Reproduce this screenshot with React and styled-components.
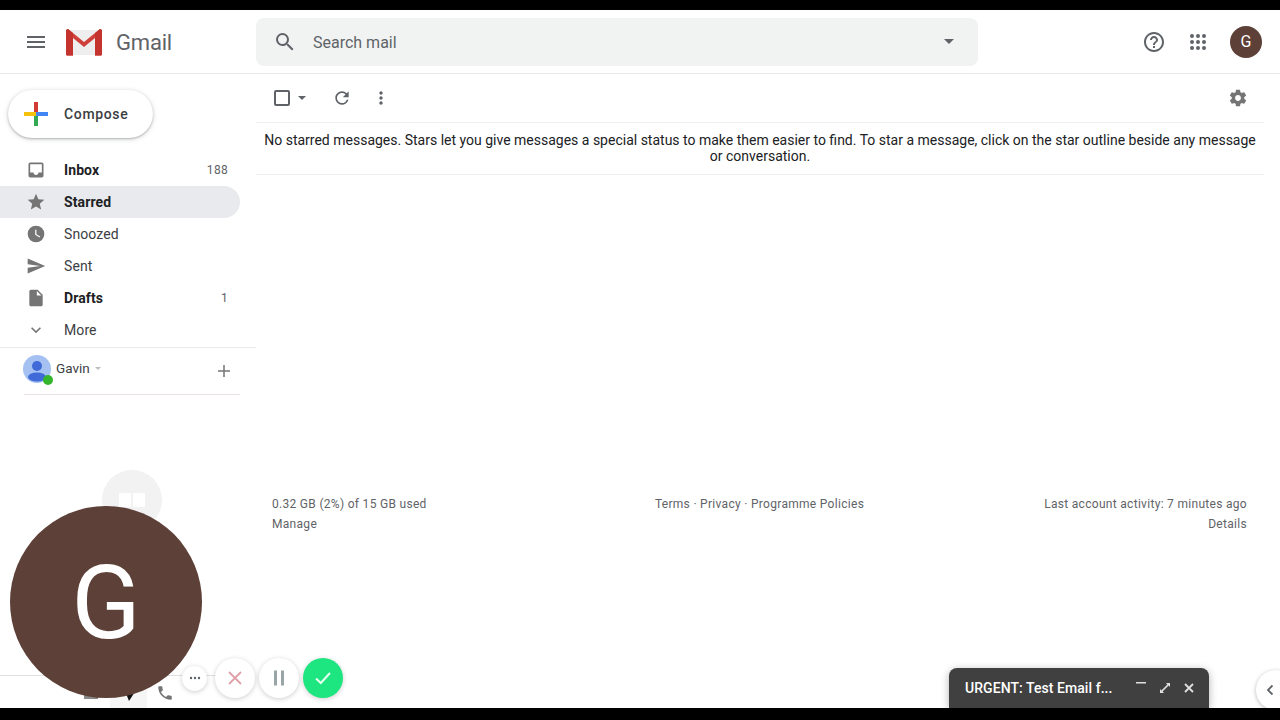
import React from 'react';
import styled, { createGlobalStyle } from 'styled-components';

const GlobalStyle = createGlobalStyle`
  html, body { margin: 0; padding: 0; background: #000; }
  body { font-family: Roboto, "Liberation Sans", sans-serif; }
  * { box-sizing: border-box; }
`;

const Screen = styled.div`
  position: relative;
  width: 1280px;
  height: 720px;
  padding: 10px 0 12px;
  background: #000;
  overflow: hidden;
`;

const Page = styled.div`
  position: relative;
  display: flex;
  flex-direction: column;
  height: 698px;
  background: #fff;
  overflow: hidden;
`;

const Header = styled.header`
  display: flex;
  align-items: center;
  flex: none;
  height: 64px;
  border-bottom: 1px solid #e8eaed;
`;

const Brand = styled.div`
  display: flex;
  align-items: center;
  width: 256px;
  padding-left: 24px;
`;

const BrandName = styled.span`
  margin-left: 13px;
  padding-top: 2px;
  font-size: 22px;
  color: #5f6368;
  letter-spacing: -0.2px;
`;

const SearchBar = styled.div`
  display: flex;
  align-items: center;
  width: 722px;
  height: 48px;
  padding: 0 16px 0 17px;
  background: #f1f3f3;
  border-radius: 8px;
`;

const SearchText = styled.span`
  flex: 1;
  margin-left: 16px;
  padding-top: 2px;
  font-size: 16px;
  color: #5f6368;
`;

const HeaderActions = styled.div`
  display: flex;
  align-items: center;
  gap: 20px;
  margin-left: auto;
  padding-right: 18px;
`;

const Avatar = styled.div`
  display: flex;
  align-items: center;
  justify-content: center;
  width: ${(p) => p.$size}px;
  height: ${(p) => p.$size}px;
  border-radius: 50%;
  background: #5d4037;
  color: #fff;
  font-size: ${(p) => p.$font}px;
`;

const Body = styled.div`
  display: flex;
  flex: 1;
  min-height: 0;
`;

const Sidebar = styled.aside`
  flex: none;
  width: 256px;
  padding-top: 16px;
`;

const Compose = styled.div`
  display: flex;
  align-items: center;
  width: 145px;
  height: 48px;
  margin: 0 0 16px 8px;
  padding-left: 16px;
  gap: 16px;
  border-radius: 24px;
  background: #fff;
  box-shadow: 0 1px 2px rgba(60, 64, 67, 0.3), 0 1px 4px 1px rgba(60, 64, 67, 0.15);
  font-size: 14px;
  font-weight: 500;
  letter-spacing: 0.65px;
  color: #3c4043;
`;

const NavList = styled.nav`
  width: 240px;
`;

const NavRow = styled.div`
  display: flex;
  align-items: center;
  height: 32px;
  padding: 0 12px 0 26px;
  border-radius: 0 16px 16px 0;
  font-size: 14px;
  letter-spacing: 0.1px;
  font-weight: ${(p) => (p.$bold ? 700 : 400)};
  color: ${(p) => (p.$bold ? '#202124' : '#3c4043')};
  background: ${(p) => (p.$active ? '#e8eaed' : 'transparent')};
`;

const NavIcon = styled.span`
  display: flex;
  width: 20px;
  height: 20px;
  margin-right: 18px;
  color: #757575;
`;

const NavCount = styled.span`
  margin-left: auto;
  font-size: 12px;
  font-weight: 400;
  letter-spacing: 0.3px;
  color: #5f6368;
`;

const AccountRow = styled.div`
  position: relative;
  display: flex;
  align-items: flex-start;
  height: 48px;
  width: 240px;
  margin-top: 1px;
  padding: 7px 8px 0 23px;
  border-top: 1px solid #e8eaed;
  font-size: 13.5px;
  color: #3c4043;
  &::after {
    content: '';
    position: absolute;
    left: 24px;
    right: 0;
    bottom: 0;
    height: 1px;
    background: #e8e2e2;
  }
  &::before {
    content: '';
    position: absolute;
    top: -1px;
    left: 240px;
    width: 16px;
    height: 1px;
    background: #e8eaed;
  }
`;

const AccountPic = styled.div`
  position: relative;
  flex: none;
  width: 28px;
  height: 28px;
  margin-right: 5px;
  border-radius: 50%;
  background: #a5c1f2;
`;

const OnlineDot = styled.span`
  position: absolute;
  right: -2px;
  bottom: -2px;
  width: 10px;
  height: 10px;
  border-radius: 50%;
  background: #34b52c;
`;

const AccountName = styled.span`
  margin-top: 5px;
`;

const Caret = styled.span`
  width: 0;
  height: 0;
  margin: ${(p) => p.$margin};
  border-left: ${(p) => p.$size}px solid transparent;
  border-right: ${(p) => p.$size}px solid transparent;
  border-top: ${(p) => p.$size}px solid ${(p) => p.$color};
`;

const AddButton = styled.span`
  margin-left: auto;
  margin-top: 8px;
  display: flex;
  color: #757575;
`;

const Main = styled.main`
  flex: 1;
  min-width: 0;
  padding-right: 16px;
`;

const Toolbar = styled.div`
  display: flex;
  align-items: center;
  height: 49px;
  padding: 0 16px 0 18px;
  border-bottom: 1px solid #eeeff1;
  color: #5f6368;
`;

const ToolbarGroup = styled.div`
  display: flex;
  align-items: center;
  margin-right: ${(p) => p.$gap}px;
`;

const CheckBox = styled.span`
  width: 16px;
  height: 16px;
  border: 2px solid #5f6368;
  border-radius: 2px;
`;

const EmptyMessage = styled.p`
  margin: 0;
  padding: 9px 6px 10px;
  border-bottom: 1px solid #eeeff1;
  font-size: 14px;
  line-height: 16px;
  text-align: center;
  color: #202124;
`;

const Footer = styled.footer`
  display: flex;
  justify-content: space-between;
  margin-top: 319px;
  padding: 0 17px 0 16px;
  font-size: 12px;
  line-height: 20px;
  letter-spacing: 0.3px;
  color: #5f6368;
`;

const FooterCol = styled.div`
  flex: 1;
  text-align: ${(p) => p.$align};
`;

/* things floating over the page */
const HangoutsGhost = styled.div`
  position: absolute;
  left: 102px;
  top: 460px;
  width: 60px;
  height: 60px;
  display: flex;
  justify-content: center;
  gap: 2px;
  padding-top: 23px;
  border-radius: 50%;
  background: #f2f2f2;
`;

const GhostMark = styled.span`
  width: 12px;
  height: 14px;
  background: #fff;
`;

const HangoutsColumn = styled.div`
  position: absolute;
  left: 110px;
  top: 650px;
  width: 37px;
  height: 48px;
  background: #f6f6f6;
`;

const HangoutsLine = styled.div`
  position: absolute;
  left: 0;
  top: 665px;
  width: 240px;
  height: 1px;
  background: #dfe0e2;
`;

const HangoutsTab = styled.span`
  position: absolute;
  left: ${(p) => p.$left}px;
  top: ${(p) => p.$top}px;
  display: flex;
  color: ${(p) => p.$color};
`;

const CallerAvatar = styled.div`
  position: absolute;
  left: 10px;
  top: 496px;
  display: flex;
  align-items: center;
  justify-content: center;
  width: 192px;
  height: 192px;
  padding-top: 2px;
  border-radius: 50%;
  background: #5d4037;
  color: #fff;
  font-size: 102px;
  line-height: 1;
`;

const CallControls = styled.div`
  position: absolute;
  left: 182px;
  top: 648px;
  display: flex;
  align-items: center;
  gap: 4px;
`;

const RoundButton = styled.div`
  display: flex;
  align-items: center;
  justify-content: center;
  width: ${(p) => p.$size}px;
  height: ${(p) => p.$size}px;
  margin-right: ${(p) => p.$after || 0}px;
  border-radius: 50%;
  background: ${(p) => p.$bg || '#fff'};
  box-shadow: 0 1px 5px rgba(0, 0, 0, 0.2);
`;

const ComposeTab = styled.div`
  position: absolute;
  left: 949px;
  top: 658px;
  display: flex;
  align-items: center;
  width: 260px;
  height: 40px;
  padding: 0 14px 0 16px;
  border-radius: 8px 8px 0 0;
  background: #404040;
  box-shadow: 0 2px 8px rgba(0, 0, 0, 0.3);
  color: #fff;
  font-size: 14px;
  font-weight: 500;
  letter-spacing: 0.06px;
`;

const ComposeTabTitle = styled.span`
  flex: 1;
`;

const ComposeTabIcons = styled.div`
  display: flex;
  align-items: center;
  gap: 12px;
`;

const SidePanelToggle = styled.div`
  position: absolute;
  left: 1256px;
  top: 660px;
  display: flex;
  align-items: center;
  width: 40px;
  height: 40px;
  padding-left: 9px;
  border-radius: 50%;
  background: #fff;
  box-shadow: 0 1px 4px rgba(0, 0, 0, 0.28);
`;

const Icon = ({ size = 24, children, fill = 'currentColor', ...rest }) => (
  <svg width={size} height={size} viewBox="0 0 24 24" fill={fill} {...rest}>
    {children}
  </svg>
);

const navItems = [
  { label: 'Inbox', bold: true, count: '188', path: 'M19 3H5a2 2 0 0 0-2 2v14a2 2 0 0 0 2 2h14a2 2 0 0 0 2-2V5a2 2 0 0 0-2-2zm0 12h-4c0 1.66-1.35 3-3 3s-3-1.34-3-3H5V5h14v10z' },
  { label: 'Starred', bold: true, active: true, path: 'M12 17.27 18.18 21l-1.64-7.03L22 9.24l-7.19-.61L12 2 9.19 8.63 2 9.24l5.46 4.73L5.82 21z' },
  { label: 'Snoozed', path: 'M12 2a10 10 0 1 0 0 20 10 10 0 0 0 0-20zm4.2 14.2L11 13V7h1.5v5.2l4.5 2.7-.8 1.3z' },
  { label: 'Sent', path: 'M2.01 21 23 12 2.01 3 2 10l15 2-15 2z' },
  { label: 'Drafts', bold: true, count: '1', path: 'M14 2H6a2 2 0 0 0-2 2v16a2 2 0 0 0 2 2h12a2 2 0 0 0 2-2V8l-6-6zm-1 7V3.5L18.5 9H13z' },
  { label: 'More', path: 'M7.41 8.59 12 13.17l4.59-4.58L18 10l-6 6-6-6z' },
];

const GmailLogo = () => (
  <svg width="38" height="28" viewBox="0 0 38 28">
    <rect x="2" y="2" width="34" height="25" fill="#eeeeee" />
    <path d="M3 1 19 14 35 1l2 1v24a1.5 1.5 0 0 1-1.500 1.500H30V10L19 19 8 10v17.500H2.500A1.500 1.500 0 0 1 1 26V2z" fill="#d0403a" />
    <path d="M1 2l2-1 5 4v22.500H2.500A1.500 1.500 0 0 1 1 26z" fill="#c5332e" />
    <path d="M37 2l-2-1-5 4v22.500h5.500A1.500 1.500 0 0 0 37 26z" fill="#c5332e" />
  </svg>
);

const ColorPlus = () => (
  <svg width="24" height="24" viewBox="0 0 24 24">
    <rect x="10" y="0" width="4" height="12" fill="#d33b36" />
    <rect x="0" y="10" width="12" height="4" fill="#f4c20d" />
    <rect x="12" y="10" width="12" height="4" fill="#4285f4" />
    <rect x="10" y="14" width="4" height="10" fill="#34a853" />
  </svg>
);

const App = () => (
  <Screen>
    <GlobalStyle />
    <Page>
      <Header>
        <Brand>
          <Icon style={{ color: '#5f6368', marginRight: 17 }}>
            <path d="M3 18h18v-2H3v2zm0-5h18v-2H3v2zm0-7v2h18V6H3z" />
          </Icon>
          <GmailLogo />
          <BrandName>Gmail</BrandName>
        </Brand>
        <SearchBar>
          <Icon style={{ color: '#5f6368' }}>
            <path d="M15.5 14h-.79l-.28-.27A6.47 6.47 0 0 0 16 9.500 6.500 6.500 0 1 0 9.500 16c1.610 0 3.090-.59 4.230-1.570l.27.28v.79l5 4.990L20.490 19l-4.990-5zm-6 0C7.010 14 5 11.990 5 9.500S7.010 5 9.500 5 14 7.010 14 9.500 11.990 14 9.500 14z" />
          </Icon>
          <SearchText>Search mail</SearchText>
          <Caret $size={5} $color="#5f6368" $margin="0 8px 0 0" />
        </SearchBar>
        <HeaderActions>
          <Icon style={{ color: '#5f6368' }}>
            <path d="M11 18h2v-2h-2v2zm1-16C6.480 2 2 6.480 2 12s4.480 10 10 10 10-4.480 10-10S17.520 2 12 2zm0 18c-4.410 0-8-3.590-8-8s3.590-8 8-8 8 3.590 8 8-3.590 8-8 8zm0-14c-2.210 0-4 1.790-4 4h2c0-1.100.9-2 2-2s2 .9 2 2c0 2-3 1.750-3 5h2c0-2.250 3-2.500 3-5 0-2.210-1.790-4-4-4z" />
          </Icon>
          <Icon style={{ color: '#5f6368' }}>
            <path d="M6 8a2 2 0 1 0 0-4 2 2 0 0 0 0 4zm6 12a2 2 0 1 0 0-4 2 2 0 0 0 0 4zm-6 0a2 2 0 1 0 0-4 2 2 0 0 0 0 4zm0-6a2 2 0 1 0 0-4 2 2 0 0 0 0 4zm6 0a2 2 0 1 0 0-4 2 2 0 0 0 0 4zm4-8a2 2 0 1 0 4 0 2 2 0 0 0-4 0zm-4 2a2 2 0 1 0 0-4 2 2 0 0 0 0 4zm6 6a2 2 0 1 0 0-4 2 2 0 0 0 0 4zm0 6a2 2 0 1 0 0-4 2 2 0 0 0 0 4z" />
          </Icon>
          <Avatar $size={32} $font={16}>G</Avatar>
        </HeaderActions>
      </Header>
      <Body>
        <Sidebar>
          <Compose>
            <ColorPlus />
            Compose
          </Compose>
          <NavList>
            {navItems.map((item) => (
              <NavRow key={item.label} $bold={item.bold} $active={item.active}>
                <NavIcon>
                  <Icon size={20}><path d={item.path} /></Icon>
                </NavIcon>
                {item.label}
                {item.count && <NavCount>{item.count}</NavCount>}
              </NavRow>
            ))}
          </NavList>
          <AccountRow>
            <AccountPic>
              <svg width="28" height="28" viewBox="0 0 28 28">
                <circle cx="14" cy="11" r="5" fill="#3f6ad8" />
                <ellipse cx="14" cy="22" rx="9" ry="4.500" fill="#3f6ad8" />
              </svg>
              <OnlineDot />
            </AccountPic>
            <AccountName>Gavin</AccountName>
            <Caret $size={3.5} $color="#bdbdbd" $margin="12px 0 0 5px" />
            <AddButton>
              <svg width="16" height="16" viewBox="0 0 16 16" fill="currentColor">
                <path d="M7.250 2h1.500v5.250H14v1.500H8.750V14h-1.500V8.750H2v-1.500h5.250z" />
              </svg>
            </AddButton>
          </AccountRow>
        </Sidebar>
        <Main>
          <Toolbar>
            <ToolbarGroup $gap={26}>
              <CheckBox />
              <Caret $size={4} $color="#5f6368" $margin="0 0 0 8px" />
            </ToolbarGroup>
            <ToolbarGroup $gap={19}>
              <Icon size={20}>
                <path d="M17.650 6.350A7.958 7.958 0 0 0 12 4c-4.420 0-7.990 3.580-7.990 8s3.570 8 7.990 8c3.730 0 6.840-2.550 7.730-6h-2.080A5.990 5.990 0 0 1 12 18c-3.310 0-6-2.690-6-6s2.690-6 6-6c1.660 0 3.140.69 4.220 1.780L13 11h7V4l-2.350 2.350z" />
              </Icon>
            </ToolbarGroup>
            <ToolbarGroup $gap={0}>
              <Icon size={20}>
                <path d="M12 8c1.100 0 2-.9 2-2s-.9-2-2-2-2 .9-2 2 .9 2 2 2zm0 2c-1.100 0-2 .9-2 2s.9 2 2 2 2-.9 2-2-.9-2-2-2zm0 6c-1.100 0-2 .9-2 2s.9 2 2 2 2-.9 2-2-.9-2-2-2z" />
              </Icon>
            </ToolbarGroup>
            <Icon size={20} style={{ marginLeft: 'auto', color: '#757575' }}>
              <path d="M19.430 12.980c.04-.32.07-.64.07-.98s-.03-.66-.07-.98l2.110-1.650c.19-.15.24-.42.12-.64l-2-3.460c-.12-.22-.39-.3-.61-.22l-2.490 1c-.52-.4-1.080-.73-1.690-.98l-.38-2.650A.488.488 0 0 0 14 2h-4c-.25 0-.46.18-.49.42l-.38 2.650c-.61.25-1.170.59-1.690.98l-2.490-1c-.23-.09-.49 0-.61.22l-2 3.460c-.13.22-.07.49.12.64l2.110 1.650c-.04.32-.07.65-.07.98s.03.66.07.98l-2.110 1.650c-.19.15-.24.42-.12.64l2 3.460c.12.22.39.3.61.22l2.490-1c.52.4 1.080.73 1.690.98l.38 2.650c.03.24.24.42.49.42h4c.25 0 .46-.18.49-.42l.38-2.650c.61-.25 1.170-.59 1.690-.98l2.490 1c.23.09.49 0 .61-.22l2-3.460c.12-.22.07-.49-.12-.64l-2.110-1.650zM12 15.500c-1.930 0-3.500-1.570-3.500-3.500s1.570-3.500 3.500-3.500 3.500 1.570 3.500 3.500-1.570 3.500-3.500 3.500z" />
            </Icon>
          </Toolbar>
          <EmptyMessage>
            No starred messages. Stars let you give messages a special status to make them easier to find. To star a message, click on the star outline beside any message or conversation.
          </EmptyMessage>
          <Footer>
            <FooterCol $align="left">
              0.32 GB (2%) of 15 GB used
              <br />
              Manage
            </FooterCol>
            <FooterCol $align="center">Terms · Privacy · Programme Policies</FooterCol>
            <FooterCol $align="right">
              Last account activity: 7 minutes ago
              <br />
              Details
            </FooterCol>
          </Footer>
        </Main>
      </Body>

      <HangoutsGhost>
        <GhostMark />
        <GhostMark />
      </HangoutsGhost>
      <HangoutsLine />
      <HangoutsColumn />
      <HangoutsTab $left={84} $top={684} $color="#8a8a8a">
        <svg width="16" height="6" viewBox="0 0 16 6" fill="currentColor">
          <rect x="0" y="0" width="14" height="5" />
        </svg>
      </HangoutsTab>
      <HangoutsTab $left={122} $top={680} $color="#111">
        <svg width="14" height="12" viewBox="0 0 14 12" fill="currentColor">
          <path d="M2 0h12L9 8l-2 3-2-5z" />
        </svg>
      </HangoutsTab>
      <HangoutsTab $left={156} $top={674} $color="#757575">
        <Icon size={18}>
          <path d="M6.620 10.790c1.440 2.830 3.760 5.140 6.590 6.590l2.200-2.200c.27-.27.67-.36 1.020-.24 1.120.37 2.330.57 3.570.57.55 0 1 .45 1 1V20c0 .55-.45 1-1 1-9.390 0-17-7.610-17-17 0-.55.45-1 1-1h3.500c.55 0 1 .45 1 1 0 1.250.2 2.450.57 3.570.11.35.03.74-.25 1.020l-2.200 2.200z" />
        </Icon>
      </HangoutsTab>
      <CallerAvatar>G</CallerAvatar>
      <CallControls>
        <RoundButton $size={25} $after={4}>
          <svg width="14" height="14" viewBox="0 0 14 14" fill="#5f6368">
            <circle cx="3" cy="7" r="1.200" />
            <circle cx="7" cy="7" r="1.200" />
            <circle cx="11" cy="7" r="1.200" />
          </svg>
        </RoundButton>
        <RoundButton $size={40}>
          <svg width="16" height="16" viewBox="0 0 16 16" fill="none" stroke="#e0a0a8" strokeWidth="1.800">
            <path d="M2 2l12 12M14 2 2 14" />
          </svg>
        </RoundButton>
        <RoundButton $size={40}>
          <svg width="12" height="16" viewBox="0 0 12 16" fill="#9aa5a8">
            <rect x="1" y="0.500" width="3" height="15" />
            <rect x="8" y="0.500" width="3" height="15" />
          </svg>
        </RoundButton>
        <RoundButton $size={40} $bg="#1de57f">
          <svg width="18" height="14" viewBox="0 0 18 14" fill="none" stroke="#e8fff2" strokeWidth="2">
            <path d="M2 7.500 6.800 12 16 2" />
          </svg>
        </RoundButton>
      </CallControls>
      <ComposeTab>
        <ComposeTabTitle>URGENT: Test Email f...</ComposeTabTitle>
        <ComposeTabIcons>
          <svg width="12" height="12" viewBox="0 0 12 12" fill="#e0e0e0">
            <rect x="1" y="0" width="10" height="1.500" />
          </svg>
          <svg width="12" height="12" viewBox="0 0 12 12" fill="#e0e0e0">
            <path d="M7 1h4v4L9.600 3.600 3.600 9.600 5 11H1V7l1.400 1.400 6-6z" />
          </svg>
          <svg width="12" height="12" viewBox="0 0 12 12" fill="none" stroke="#e0e0e0" strokeWidth="1.800">
            <path d="M2 2l8 8M10 2 2 10" />
          </svg>
        </ComposeTabIcons>
      </ComposeTab>
      <SidePanelToggle>
        <svg width="10" height="12" viewBox="0 0 10 12" fill="none" stroke="#5f6368" strokeWidth="1.800">
          <path d="M7.500 1.500 3 6l4.500 4.500" />
        </svg>
      </SidePanelToggle>
    </Page>
  </Screen>
);

export default App;
